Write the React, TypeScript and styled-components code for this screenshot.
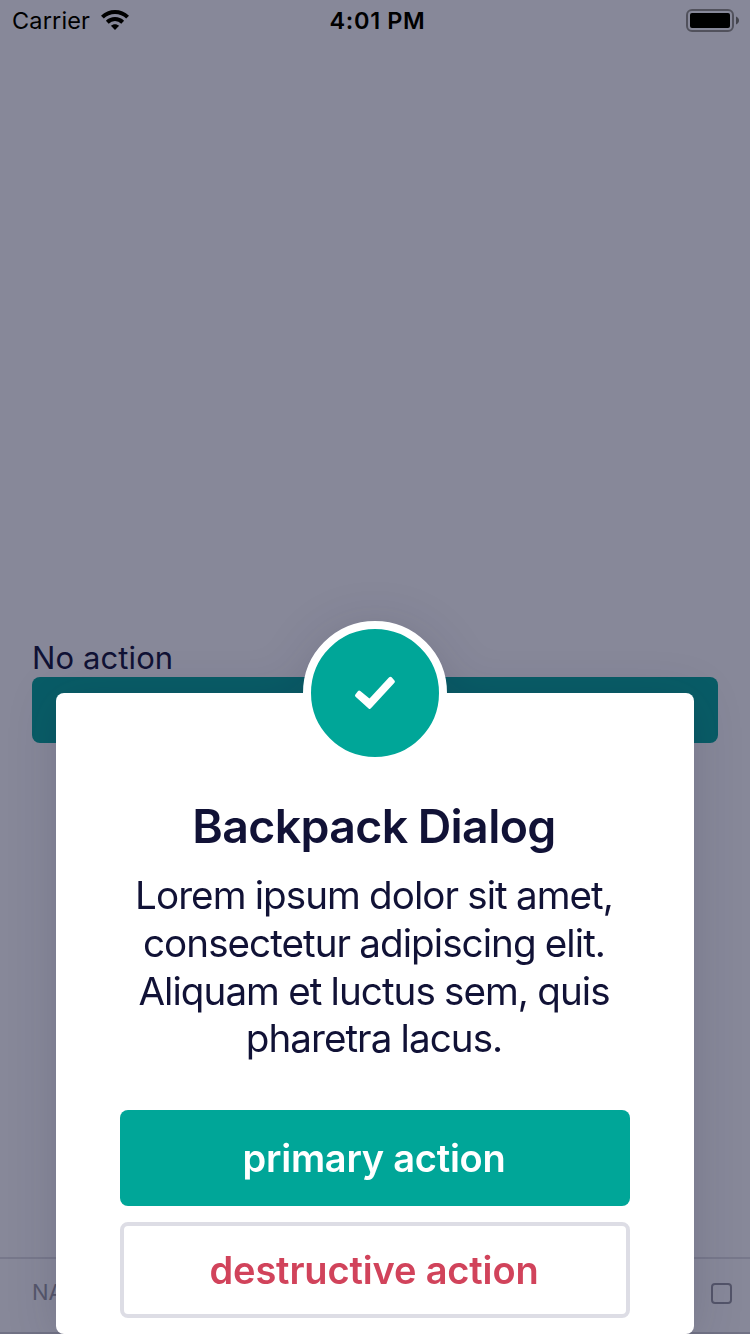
import React from 'react';
import styled, { createGlobalStyle } from 'styled-components';

const ink = '#111236';
const teal = '#00a698';

const GlobalStyle = createGlobalStyle`
  * { box-sizing: border-box; }
  body { margin: 0; background: #fff; }
`;

const Screen = styled.div`
  position: relative;
  width: 750px;
  height: 1334px;
  overflow: hidden;
  background: #fff;
  color: ${ink};
  font-family: Inter, 'Liberation Sans', sans-serif;
`;

const Page = styled.main`
  height: 100%;
  display: flex;
  flex-direction: column;
  justify-content: space-between;
`;

const Story = styled.section`
  padding: 638px 32px 0;
`;

const StoryLabel = styled.div`
  height: 39px;
  font-size: 31px;
  line-height: 39px;
  letter-spacing: 0.1px;
  white-space: nowrap;
`;

const StoryButton = styled.div`
  height: 66px;
  border-radius: 8px;
  background: ${teal};
`;

const TabBar = styled.footer`
  height: 77px;
  padding: 0 18px 7px 32px;
  display: flex;
  align-items: center;
  justify-content: space-between;
  border-top: 2px solid #dfdfe3;
  border-bottom: 2px solid #d2d2d6;
  color: #9b9ba3;
  font-size: 22px;
`;

const TabBox = styled.span`
  width: 21px;
  height: 21px;
  margin-top: 2px;
  border: 2px solid #97979f;
  border-radius: 4px;
`;

const Scrim = styled.div`
  position: absolute;
  inset: 0;
  background: rgba(16, 18, 52, 0.5);
`;

const StatusBar = styled.header`
  position: absolute;
  inset: 0 0 auto;
  height: 42px;
  padding: 0 10px 0 12px;
  display: grid;
  grid-template-columns: 1fr auto 1fr;
  align-items: center;
  color: #000;
  font-size: 23.5px;
  line-height: 42px;
`;

const Carrier = styled.div`
  display: flex;
  align-items: center;
  gap: 11px;
  letter-spacing: 0.15px;

  svg { margin-top: -2px; }
`;

const Clock = styled.div`
  padding-left: 3px;
  font-weight: 600;
  letter-spacing: 0.65px;
`;

const BatterySlot = styled.div`
  display: flex;
  justify-content: flex-end;
`;

const Dialog = styled.section`
  position: absolute;
  left: 56px;
  right: 56px;
  top: 693px;
  height: 641px;
  padding: 0 64px;
  display: flex;
  flex-direction: column;
  align-items: stretch;
  text-align: center;
  background: #fff;
  border-radius: 8px;
  filter: drop-shadow(0 6px 24px rgba(17, 18, 54, 0.15));
`;

const Badge = styled.div`
  align-self: center;
  flex: none;
  width: 144px;
  height: 144px;
  margin-top: -72px;
  display: grid;
  place-items: center;
  border: 8px solid #fff;
  border-radius: 50%;
  background: ${teal};
`;

const Title = styled.h1`
  margin: 31px 0 0;
  font-size: 46.4px;
  line-height: 60px;
  font-weight: 600;
  letter-spacing: -0.6px;
  word-spacing: -1px;
  text-indent: -2px;
  white-space: nowrap;
`;

const Message = styled.p`
  margin: 16px 1px 47px -1px;
  font-size: 38.6px;
  line-height: 47.75px;
  letter-spacing: -0.95px;
  word-spacing: -0.7px;
`;

const Action = styled.button<{ $destructive?: boolean }>`
  flex: none;
  height: 96px;
  margin: 0 0 16px;
  padding: 0 2px 0 0;
  border: ${p => (p.$destructive ? '4px solid #dddde5' : '0')};
  border-radius: 8px;
  background: ${p => (p.$destructive ? '#fff' : teal)};
  color: ${p => (p.$destructive ? '#d1435b' : '#fff')};
  font: 600 38px Inter, 'Liberation Sans', sans-serif;
  letter-spacing: ${p => (p.$destructive ? '-0.15px' : '-0.25px')};
`;

const WifiIcon = () => (
  <svg width="28" height="20" viewBox="0 0 28 20">
    <g fill="none" stroke="#000" strokeWidth="4">
      <path d="M1.4 7.2C8.4 .3 19.6 .3 26.6 7.2" />
      <path d="M6.3 12.2C10.6 8 17.4 8 21.7 12.2" />
    </g>
    <path d="M9.9 15.7C12.2 13.6 15.8 13.6 18.1 15.7L14 20Z" />
  </svg>
);

const BatteryIcon = () => (
  <svg width="54" height="24" viewBox="0 0 54 24">
    <rect x="1" y="1" width="46" height="21" rx="5" fill="none" stroke="#000" strokeOpacity=".4" strokeWidth="2" />
    <rect x="4" y="4" width="40" height="15" rx="2" />
    <path d="M50 7.5C54 9 54 14 50 15.5Z" fillOpacity=".5" />
  </svg>
);

const CheckIcon = () => (
  <svg width="42" height="34" viewBox="0 0 42 34">
    <path
      d="M5.2 16.3L2.7 19.5L15.7 31.2L39.2 5.6L36.4 2.5L15.6 24.9Z"
      fill="#fff"
      stroke="#fff"
      strokeWidth="3.4"
      strokeLinejoin="round"
    />
  </svg>
);

export default function App() {
  return (
    <Screen>
      <GlobalStyle />
      <Page>
        <Story>
          <StoryLabel>No action</StoryLabel>
          <StoryButton />
        </Story>
        <TabBar>
          <span>NA</span>
          <TabBox />
        </TabBar>
      </Page>
      <Scrim />
      <StatusBar>
        <Carrier>Carrier <WifiIcon /></Carrier>
        <Clock>4:01 PM</Clock>
        <BatterySlot><BatteryIcon /></BatterySlot>
      </StatusBar>
      <Dialog role="dialog">
        <Badge><CheckIcon /></Badge>
        <Title>Backpack Dialog</Title>
        <Message>
          Lorem ipsum dolor sit amet, consectetur adipiscing elit. Aliquam et luctus sem, quis pharetra lacus.
        </Message>
        <Action>primary action</Action>
        <Action $destructive>destructive action</Action>
      </Dialog>
    </Screen>
  );
}
